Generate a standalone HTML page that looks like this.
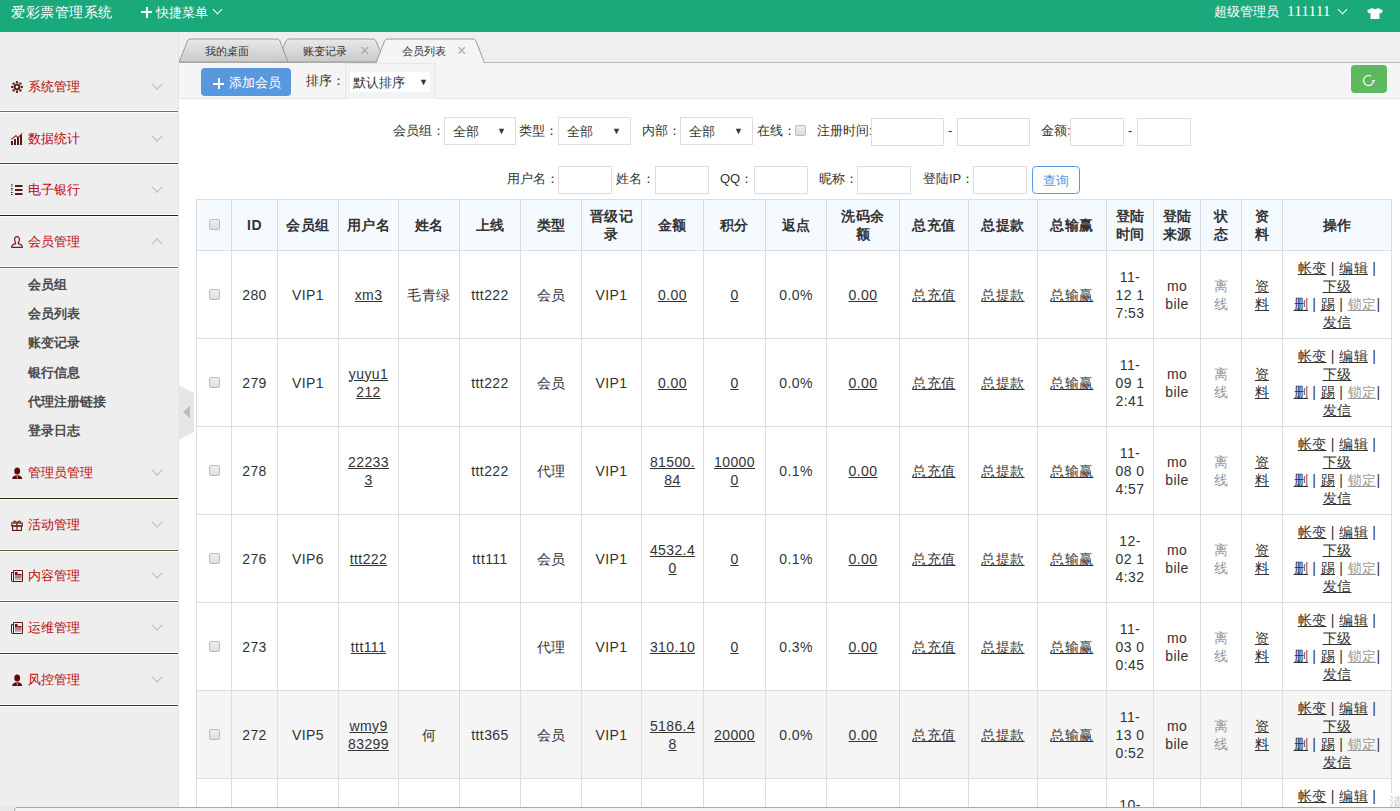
<!DOCTYPE html>
<html><head><meta charset="utf-8">
<style>
*{margin:0;padding:0;box-sizing:border-box}
html,body{width:1400px;height:811px;overflow:hidden;background:#fff;font-family:"Liberation Sans",sans-serif;color:#333;font-size:14px}
.abs{position:absolute}
#hdr{position:absolute;left:0;top:0;width:1400px;height:32px;background:#19a97b;color:#fff}
#hdr .t{position:absolute;left:11px;top:2px;font-size:14px;letter-spacing:0.5px;line-height:20px;white-space:nowrap}
#side{position:absolute;left:0;top:32px;width:179px;height:779px;background:#eee;border-right:1px solid #e3e3e3}
.si{position:absolute;left:0;width:178px}
.si .ic{position:absolute;left:11px;top:50%;margin-top:-6px;width:12px;height:12px;display:block}
.si .ic svg{display:block}
.si .st{position:absolute;left:28px;top:50%;margin-top:-9px;line-height:18px;font-size:13px;color:#bb0808;white-space:nowrap}
.chev{position:absolute;left:153px;top:50%;margin-top:-7px;width:8px;height:8px;border-right:1px solid #bbb;border-bottom:1px solid #bbb;transform:rotate(45deg)}
.chev.up{margin-top:-2px;transform:rotate(-135deg)}
.sep{position:absolute;left:0;width:178px;height:3px;border-top:1px solid #fff;border-bottom:1px solid #fff;background:#55583a}
.sub{position:absolute;left:28px;font-size:13px;line-height:20px;color:#4a4a4a;font-weight:bold;white-space:nowrap}
#tabbar{position:absolute;left:179px;top:32px;width:1221px;height:31px;background:#efeff1;border-bottom:1px solid #b8b8b8}
#toolbar{position:absolute;left:179px;top:63px;width:1221px;height:36px;background:#f5f5f5;border-bottom:1px solid #e2e2e2}
.tabtxt{position:absolute;top:43px;font-size:11px;line-height:16px;color:#333;white-space:nowrap}
.tabx{position:absolute;top:43px;font-size:16px;line-height:16px;color:#aaa}
.btn-add{position:absolute;left:201px;top:68px;width:90px;height:28px;background:#5a98de;border-radius:4px;color:#fff;font-size:13px;line-height:28px}
.lbl{position:absolute;font-size:13px;line-height:18px;color:#333;white-space:nowrap}
.sel{position:absolute;height:28px;border:1px solid #ddd;background:#fff;font-size:12.5px;line-height:28px;color:#333}
.sel .tri{position:absolute;right:9px;top:-1px;font-size:9px}
.inp{position:absolute;height:28px;border:1px solid #ddd;background:#fff}
.c{position:absolute;border-left:1px solid #ddd;border-top:1px solid #ddd;display:flex;align-items:center;justify-content:center;text-align:center;line-height:18px;font-size:14px;color:#333;white-space:nowrap;letter-spacing:0.4px}
.c.th{background:#f5fafe;font-weight:bold}
.c.hov{background:#f5f5f5}
.c.top{align-items:flex-start;padding-top:9px}
.c u{text-decoration:underline}
.g{color:#999}
.cb{display:inline-block;width:11px;height:11px;border:1px solid #bbb;border-radius:2px;background:linear-gradient(#eee,#ddd)}
</style></head><body>
<div id="hdr">
  <div class="t">爱彩票管理系统</div>
  <div class="abs" style="left:141px;top:7px;width:11px;height:11px">
    <div class="abs" style="left:0;top:4px;width:11px;height:2px;background:#fff"></div>
    <div class="abs" style="left:4.5px;top:0;width:2px;height:11px;background:#fff"></div>
  </div>
  <div class="abs" style="left:156px;top:4px;font-size:12.5px;line-height:18px;white-space:nowrap">快捷菜单</div>
  <div class="abs" style="left:214px;top:6px;width:7px;height:7px;border-right:1.5px solid #fff;border-bottom:1.5px solid #fff;transform:rotate(45deg)"></div>
  <div class="abs" style="left:1214px;top:3px;font-size:12.5px;line-height:18px;white-space:nowrap">超级管理员</div>
  <div class="abs" style="left:1287px;top:2px;font-family:'Liberation Serif',serif;font-size:15.5px;line-height:18px;white-space:nowrap">111111</div>
  <div class="abs" style="left:1339px;top:6px;width:7px;height:7px;border-right:1.5px solid #fff;border-bottom:1.5px solid #fff;transform:rotate(45deg)"></div>
  <svg class="abs" style="left:1367px;top:8px" width="16" height="11" viewBox="0 0 16 11"><path d="M5 0 L0 2.5 L1.8 5.5 L3.5 4.8 L3.5 11 L12.5 11 L12.5 4.8 L14.2 5.5 L16 2.5 L11 0 C10 1.5 6 1.5 5 0Z" fill="#fff"/></svg>
</div>
<div id="side">
</div>
<div style="position:absolute;left:0;top:0">
<div class="si" style="top:61px;height:51px"><span class="ic"><svg width="12" height="12" viewBox="0 0 12 12"><g fill="#5a1a10"><circle cx="6" cy="6" r="3.3"/><circle cx="6" cy="1.2" r="1.2"/><circle cx="6" cy="10.8" r="1.2"/><circle cx="1.2" cy="6" r="1.2"/><circle cx="10.8" cy="6" r="1.2"/><circle cx="2.6" cy="2.6" r="1.2"/><circle cx="9.4" cy="9.4" r="1.2"/><circle cx="2.6" cy="9.4" r="1.2"/><circle cx="9.4" cy="2.6" r="1.2"/></g><circle cx="6" cy="6" r="1.4" fill="#eee"/></svg></span><span class="st">系统管理</span><span class="chev"></span></div>
<div class="sep" style="top:110px;background:#707060"></div>
<div class="si" style="top:113px;height:51px"><span class="ic"><svg width="12" height="12" viewBox="0 0 12 12"><g fill="#5a1a10"><rect x="0" y="8" width="2" height="4"/><rect x="3" y="6" width="2" height="6"/><rect x="6" y="4" width="2" height="8"/><rect x="9" y="2" width="2" height="10"/><path d="M0 6 L5 2 L7 4 L11 0 L11.6 0.6 L7 5.2 L5 3.2 L0.6 6.8Z"/></g></svg></span><span class="st">数据统计</span><span class="chev"></span></div>
<div class="sep" style="top:162px;background:#4a4a2c"></div>
<div class="si" style="top:164px;height:51px"><span class="ic"><svg width="12" height="12" viewBox="0 0 12 12"><g fill="#5a1a10"><rect x="0.5" y="-0.5" width="1" height="3"/><rect x="0" y="4" width="1.6" height="1"/><rect x="0" y="5.5" width="1.6" height="1"/><rect x="0" y="8" width="1.6" height="1"/><rect x="0" y="10" width="1.6" height="1"/><rect x="4" y="1" width="7.5" height="2"/><rect x="4" y="5" width="7.5" height="2"/><rect x="4" y="9" width="7.5" height="2"/></g></svg></span><span class="st">电子银行</span><span class="chev"></span></div>
<div class="sep" style="top:214px;background:#22220f"></div>
<div class="si" style="top:216px;height:51px"><span class="ic"><svg width="12" height="12" viewBox="0 0 12 12"><path d="M6 0.7 C4.3 0.7 3.6 2 3.6 3.6 C3.6 5.2 4.4 6.3 4.6 6.8 L4.6 7.6 C2.5 8.2 0.8 9 0.8 10.6 L0.8 11.4 L11.2 11.4 L11.2 10.6 C11.2 9 9.5 8.2 7.4 7.6 L7.4 6.8 C7.6 6.3 8.4 5.2 8.4 3.6 C8.4 2 7.7 0.7 6 0.7Z" fill="none" stroke="#6a2020" stroke-width="1.2"/></svg></span><span class="st">会员管理</span><span class="chev up"></span></div>
<div class="sep" style="top:266px;background:#6a6a55"></div>
<div class="si" style="top:447px;height:51px"><span class="ic"><svg width="12" height="12" viewBox="0 0 12 12"><g fill="#620606"><ellipse cx="6.2" cy="3.9" rx="2.9" ry="3.5"/><path d="M1.2 12.4 C1.2 9.4 3 8.2 6.2 8.2 C9.4 8.2 11.2 9.4 11.2 12.4Z"/></g><rect x="5.7" y="9" width="1" height="2.5" fill="#c9b0a0"/></svg></span><span class="st">管理员管理</span><span class="chev"></span></div>
<div class="sep" style="top:497px;background:#181c08"></div>
<div class="si" style="top:499px;height:51px"><span class="ic"><svg width="12" height="12" viewBox="0 0 12 12"><g fill="none" stroke="#5a1a10" stroke-width="1.1"><rect x="0.8" y="4" width="10.4" height="3"/><rect x="1.6" y="7" width="8.8" height="4.5"/><path d="M6 4 V11.5 M6 4 C4 1 2 1.5 3 4 M6 4 C8 1 10 1.5 9 4"/></g></svg></span><span class="st">活动管理</span><span class="chev"></span></div>
<div class="sep" style="top:549px;background:#555a38"></div>
<div class="si" style="top:551px;height:50px"><span class="ic"><svg width="12" height="12" viewBox="0 0 12 12"><g fill="none" stroke="#6a1010" stroke-width="1"><path d="M2.5 0.5 H11.5 V11.5 H1.2 Q0.5 11.5 0.5 10.8 V2.5 H2.5"/><path d="M2.5 0.5 V11.2"/></g><g fill="#6a1010"><rect x="4" y="2" width="2.5" height="3.5"/><rect x="6.5" y="4" width="4" height="1.5"/><rect x="4" y="6.5" width="6.5" height="1"/><rect x="4" y="8.5" width="6.5" height="1" opacity="0.6"/></g></svg></span><span class="st">内容管理</span><span class="chev"></span></div>
<div class="sep" style="top:600px;background:#60644a"></div>
<div class="si" style="top:602px;height:51px"><span class="ic"><svg width="12" height="12" viewBox="0 0 12 12"><g fill="none" stroke="#6a1010" stroke-width="1"><path d="M2.5 0.5 H11.5 V11.5 H1.2 Q0.5 11.5 0.5 10.8 V2.5 H2.5"/><path d="M2.5 0.5 V11.2"/></g><g fill="#6a1010"><rect x="4" y="2" width="2.5" height="3.5"/><rect x="6.5" y="4" width="4" height="1.5"/><rect x="4" y="6.5" width="6.5" height="1"/><rect x="4" y="8.5" width="6.5" height="1" opacity="0.6"/></g></svg></span><span class="st">运维管理</span><span class="chev"></span></div>
<div class="sep" style="top:652px;background:#3c3e26"></div>
<div class="si" style="top:654px;height:51px"><span class="ic"><svg width="12" height="12" viewBox="0 0 12 12"><g fill="#620606"><ellipse cx="6.2" cy="3.9" rx="2.9" ry="3.5"/><path d="M1.2 12.4 C1.2 9.4 3 8.2 6.2 8.2 C9.4 8.2 11.2 9.4 11.2 12.4Z"/></g><rect x="5.7" y="9" width="1" height="2.5" fill="#c9b0a0"/></svg></span><span class="st">风控管理</span><span class="chev"></span></div>
<div class="sep" style="top:704px;background:#3c3e26"></div>
<div class="sub" style="top:274.6px">会员组</div>
<div class="sub" style="top:303.9px">会员列表</div>
<div class="sub" style="top:333.2px">账变记录</div>
<div class="sub" style="top:362.5px">银行信息</div>
<div class="sub" style="top:391.8px">代理注册链接</div>
<div class="sub" style="top:421.1px">登录日志</div>
</div>
<div id="tabbar"></div>
<svg class="abs" style="left:179px;top:38px" width="320" height="25" viewBox="0 0 320 25">
  <defs>
    <linearGradient id="tg" x1="0" y1="0" x2="0" y2="1"><stop offset="0" stop-color="#e9e9e9"/><stop offset="1" stop-color="#c9c9c9"/></linearGradient>
    <linearGradient id="ta" x1="0" y1="0" x2="0" y2="1"><stop offset="0" stop-color="#f4f4f4"/><stop offset="1" stop-color="#f5f5f5"/></linearGradient>
  </defs>
  <path d="M98 24 L107 3 Q108 1 110 1 L194 1 Q196 1 197 3 L206 24Z" fill="url(#tg)" stroke="#9a9a9a" stroke-width="1"/>
  <path d="M0 24 L8.5 3 Q9.5 1 11.5 1 L98 1 Q100 1 101 3 L109 24Z" fill="url(#tg)" stroke="#9a9a9a" stroke-width="1"/>
  <path d="M197 25 L205.5 3 Q206.5 1 208.5 1 L294 1 Q296 1 297 3 L305.5 25" fill="url(#ta)" stroke="#9a9a9a" stroke-width="1"/>
</svg>
<div class="tabtxt" style="left:205px">我的桌面</div>
<div class="tabtxt" style="left:303px">账变记录</div>
<div class="tabx" style="left:360px">&#215;</div>
<div class="tabtxt" style="left:402px">会员列表</div>
<div class="tabx" style="left:457px">&#215;</div>
<div id="toolbar"></div>
<div class="btn-add">
  <div class="abs" style="left:12px;top:10px;width:11px;height:11px">
    <div class="abs" style="left:0;top:4.5px;width:11px;height:2px;background:#fff"></div>
    <div class="abs" style="left:4.5px;top:0;width:2px;height:11px;background:#fff"></div>
  </div>
  <span class="abs" style="left:28px;top:1px;white-space:nowrap">添加会员</span>
</div>
<div class="lbl" style="left:306px;top:72px">排序：</div>
<div class="abs" style="left:345px;top:63px;width:91px;height:36px;border:1px solid #e6e6e6;border-bottom:none;background:#f3f3f3"></div>
<div class="abs" style="left:350px;top:72px;width:80px;height:20px;background:#fff;font-size:13px;line-height:22px;padding-left:3px;white-space:nowrap">默认排序<span class="abs" style="left:69px;top:-1px;font-size:9px">&#9660;</span></div>
<div class="abs" style="left:1351px;top:65px;width:36px;height:28px;background:#5eb95e;border-radius:4px">
  <svg class="abs" style="left:10px;top:8px" width="15" height="15" viewBox="0 0 15 15"><path d="M12.4 8.6 A5 5 0 1 1 10 3.2" fill="none" stroke="#fff" stroke-width="1.2"/><path d="M10.8 7 L14.4 7 L12.5 9.6Z" fill="#fff"/></svg>
</div>
<!-- filters row 1 -->
<div class="lbl" style="left:393px;top:122px">会员组：</div>
<div class="sel" style="left:444px;top:117px;width:72px"><span style="padding-left:8px">全部</span><span class="tri">&#9660;</span></div>
<div class="lbl" style="left:519px;top:122px">类型：</div>
<div class="sel" style="left:558px;top:117px;width:73px"><span style="padding-left:8px">全部</span><span class="tri">&#9660;</span></div>
<div class="lbl" style="left:642px;top:122px">内部：</div>
<div class="sel" style="left:680px;top:117px;width:73px"><span style="padding-left:8px">全部</span><span class="tri">&#9660;</span></div>
<div class="lbl" style="left:757px;top:122px">在线：</div>
<span class="cb abs" style="left:795px;top:125px"></span>
<div class="lbl" style="left:817px;top:122px">注册时间:</div>
<div class="inp" style="left:871px;top:118px;width:73px"></div>
<div class="lbl" style="left:948px;top:122px">-</div>
<div class="inp" style="left:957px;top:118px;width:73px"></div>
<div class="lbl" style="left:1041px;top:122px">金额:</div>
<div class="inp" style="left:1070px;top:118px;width:54px"></div>
<div class="lbl" style="left:1128px;top:122px">-</div>
<div class="inp" style="left:1137px;top:118px;width:54px"></div>
<!-- filters row 2 -->
<div class="lbl" style="left:507px;top:170px">用户名：</div>
<div class="inp" style="left:558px;top:166px;width:54px"></div>
<div class="lbl" style="left:616px;top:170px">姓名：</div>
<div class="inp" style="left:655px;top:166px;width:54px"></div>
<div class="lbl" style="left:720px;top:170px">QQ：</div>
<div class="inp" style="left:754px;top:166px;width:54px"></div>
<div class="lbl" style="left:819px;top:170px">昵称：</div>
<div class="inp" style="left:857px;top:166px;width:54px"></div>
<div class="lbl" style="left:923px;top:170px">登陆IP：</div>
<div class="inp" style="left:973px;top:166px;width:54px"></div>
<div class="abs" style="left:1032px;top:166px;width:48px;height:28px;border:1px solid #5a98de;border-radius:4px;color:#5a98de;font-size:13px;line-height:28px;text-align:center">查询</div>
<!-- table -->
<div style="position:absolute;left:0;top:0">
<div class="c th" style="left:196px;top:199px;width:35px;height:51px"><div><span class="cb"></span></div></div>
<div class="c th" style="left:231px;top:199px;width:46px;height:51px"><div>ID</div></div>
<div class="c th" style="left:277px;top:199px;width:61px;height:51px"><div>会员组</div></div>
<div class="c th" style="left:338px;top:199px;width:60px;height:51px"><div>用户名</div></div>
<div class="c th" style="left:398px;top:199px;width:61px;height:51px"><div>姓名</div></div>
<div class="c th" style="left:459px;top:199px;width:61px;height:51px"><div>上线</div></div>
<div class="c th" style="left:520px;top:199px;width:61px;height:51px"><div>类型</div></div>
<div class="c th" style="left:581px;top:199px;width:60px;height:51px"><div>晋级记<br>录</div></div>
<div class="c th" style="left:641px;top:199px;width:62px;height:51px"><div>金额</div></div>
<div class="c th" style="left:703px;top:199px;width:62px;height:51px"><div>积分</div></div>
<div class="c th" style="left:765px;top:199px;width:61px;height:51px"><div>返点</div></div>
<div class="c th" style="left:826px;top:199px;width:73px;height:51px"><div>洗码余<br>额</div></div>
<div class="c th" style="left:899px;top:199px;width:69px;height:51px"><div>总充值</div></div>
<div class="c th" style="left:968px;top:199px;width:69px;height:51px"><div>总提款</div></div>
<div class="c th" style="left:1037px;top:199px;width:69px;height:51px"><div>总输赢</div></div>
<div class="c th" style="left:1106px;top:199px;width:47px;height:51px"><div>登陆<br>时间</div></div>
<div class="c th" style="left:1153px;top:199px;width:47px;height:51px"><div>登陆<br>来源</div></div>
<div class="c th" style="left:1200px;top:199px;width:41px;height:51px"><div>状<br>态</div></div>
<div class="c th" style="left:1241px;top:199px;width:41px;height:51px"><div>资<br>料</div></div>
<div class="c th" style="left:1282px;top:199px;width:109px;height:51px"><div>操作</div></div>
<div class="c td" style="left:196px;top:250px;width:35px;height:88px"><div><span class="cb"></span></div></div>
<div class="c td" style="left:231px;top:250px;width:46px;height:88px"><div>280</div></div>
<div class="c td" style="left:277px;top:250px;width:61px;height:88px"><div>VIP1</div></div>
<div class="c td" style="left:338px;top:250px;width:60px;height:88px"><div><u>xm3</u></div></div>
<div class="c td" style="left:398px;top:250px;width:61px;height:88px"><div>毛青绿</div></div>
<div class="c td" style="left:459px;top:250px;width:61px;height:88px"><div>ttt222</div></div>
<div class="c td" style="left:520px;top:250px;width:61px;height:88px"><div>会员</div></div>
<div class="c td" style="left:581px;top:250px;width:60px;height:88px"><div>VIP1</div></div>
<div class="c td" style="left:641px;top:250px;width:62px;height:88px"><div><u>0.00</u></div></div>
<div class="c td" style="left:703px;top:250px;width:62px;height:88px"><div><u>0</u></div></div>
<div class="c td" style="left:765px;top:250px;width:61px;height:88px"><div>0.0%</div></div>
<div class="c td" style="left:826px;top:250px;width:73px;height:88px"><div><u>0.00</u></div></div>
<div class="c td" style="left:899px;top:250px;width:69px;height:88px"><div><u>总充值</u></div></div>
<div class="c td" style="left:968px;top:250px;width:69px;height:88px"><div><u>总提款</u></div></div>
<div class="c td" style="left:1037px;top:250px;width:69px;height:88px"><div><u>总输赢</u></div></div>
<div class="c td" style="left:1106px;top:250px;width:47px;height:88px"><div>11-<br>12 1<br>7:53</div></div>
<div class="c td" style="left:1153px;top:250px;width:47px;height:88px"><div>mo<br>bile</div></div>
<div class="c td" style="left:1200px;top:250px;width:41px;height:88px"><div><span class="g">离<br>线</span></div></div>
<div class="c td" style="left:1241px;top:250px;width:41px;height:88px"><div><u>资</u><br><u>料</u></div></div>
<div class="c td" style="left:1282px;top:250px;width:109px;height:88px"><div><u>帐变</u> | <u>编辑</u> |<br><u>下级</u><br><u>删</u> | <u>踢</u> | <u class="g">锁定</u>|<br><u>发信</u></div></div>
<div class="c td" style="left:196px;top:338px;width:35px;height:88px"><div><span class="cb"></span></div></div>
<div class="c td" style="left:231px;top:338px;width:46px;height:88px"><div>279</div></div>
<div class="c td" style="left:277px;top:338px;width:61px;height:88px"><div>VIP1</div></div>
<div class="c td" style="left:338px;top:338px;width:60px;height:88px"><div><u>yuyu1</u><br><u>212</u></div></div>
<div class="c td" style="left:398px;top:338px;width:61px;height:88px"><div></div></div>
<div class="c td" style="left:459px;top:338px;width:61px;height:88px"><div>ttt222</div></div>
<div class="c td" style="left:520px;top:338px;width:61px;height:88px"><div>会员</div></div>
<div class="c td" style="left:581px;top:338px;width:60px;height:88px"><div>VIP1</div></div>
<div class="c td" style="left:641px;top:338px;width:62px;height:88px"><div><u>0.00</u></div></div>
<div class="c td" style="left:703px;top:338px;width:62px;height:88px"><div><u>0</u></div></div>
<div class="c td" style="left:765px;top:338px;width:61px;height:88px"><div>0.0%</div></div>
<div class="c td" style="left:826px;top:338px;width:73px;height:88px"><div><u>0.00</u></div></div>
<div class="c td" style="left:899px;top:338px;width:69px;height:88px"><div><u>总充值</u></div></div>
<div class="c td" style="left:968px;top:338px;width:69px;height:88px"><div><u>总提款</u></div></div>
<div class="c td" style="left:1037px;top:338px;width:69px;height:88px"><div><u>总输赢</u></div></div>
<div class="c td" style="left:1106px;top:338px;width:47px;height:88px"><div>11-<br>09 1<br>2:41</div></div>
<div class="c td" style="left:1153px;top:338px;width:47px;height:88px"><div>mo<br>bile</div></div>
<div class="c td" style="left:1200px;top:338px;width:41px;height:88px"><div><span class="g">离<br>线</span></div></div>
<div class="c td" style="left:1241px;top:338px;width:41px;height:88px"><div><u>资</u><br><u>料</u></div></div>
<div class="c td" style="left:1282px;top:338px;width:109px;height:88px"><div><u>帐变</u> | <u>编辑</u> |<br><u>下级</u><br><u>删</u> | <u>踢</u> | <u class="g">锁定</u>|<br><u>发信</u></div></div>
<div class="c td" style="left:196px;top:426px;width:35px;height:88px"><div><span class="cb"></span></div></div>
<div class="c td" style="left:231px;top:426px;width:46px;height:88px"><div>278</div></div>
<div class="c td" style="left:277px;top:426px;width:61px;height:88px"><div></div></div>
<div class="c td" style="left:338px;top:426px;width:60px;height:88px"><div><u>22233</u><br><u>3</u></div></div>
<div class="c td" style="left:398px;top:426px;width:61px;height:88px"><div></div></div>
<div class="c td" style="left:459px;top:426px;width:61px;height:88px"><div>ttt222</div></div>
<div class="c td" style="left:520px;top:426px;width:61px;height:88px"><div>代理</div></div>
<div class="c td" style="left:581px;top:426px;width:60px;height:88px"><div>VIP1</div></div>
<div class="c td" style="left:641px;top:426px;width:62px;height:88px"><div><u>81500.</u><br><u>84</u></div></div>
<div class="c td" style="left:703px;top:426px;width:62px;height:88px"><div><u>10000</u><br><u>0</u></div></div>
<div class="c td" style="left:765px;top:426px;width:61px;height:88px"><div>0.1%</div></div>
<div class="c td" style="left:826px;top:426px;width:73px;height:88px"><div><u>0.00</u></div></div>
<div class="c td" style="left:899px;top:426px;width:69px;height:88px"><div><u>总充值</u></div></div>
<div class="c td" style="left:968px;top:426px;width:69px;height:88px"><div><u>总提款</u></div></div>
<div class="c td" style="left:1037px;top:426px;width:69px;height:88px"><div><u>总输赢</u></div></div>
<div class="c td" style="left:1106px;top:426px;width:47px;height:88px"><div>11-<br>08 0<br>4:57</div></div>
<div class="c td" style="left:1153px;top:426px;width:47px;height:88px"><div>mo<br>bile</div></div>
<div class="c td" style="left:1200px;top:426px;width:41px;height:88px"><div><span class="g">离<br>线</span></div></div>
<div class="c td" style="left:1241px;top:426px;width:41px;height:88px"><div><u>资</u><br><u>料</u></div></div>
<div class="c td" style="left:1282px;top:426px;width:109px;height:88px"><div><u>帐变</u> | <u>编辑</u> |<br><u>下级</u><br><u>删</u> | <u>踢</u> | <u class="g">锁定</u>|<br><u>发信</u></div></div>
<div class="c td" style="left:196px;top:514px;width:35px;height:88px"><div><span class="cb"></span></div></div>
<div class="c td" style="left:231px;top:514px;width:46px;height:88px"><div>276</div></div>
<div class="c td" style="left:277px;top:514px;width:61px;height:88px"><div>VIP6</div></div>
<div class="c td" style="left:338px;top:514px;width:60px;height:88px"><div><u>ttt222</u></div></div>
<div class="c td" style="left:398px;top:514px;width:61px;height:88px"><div></div></div>
<div class="c td" style="left:459px;top:514px;width:61px;height:88px"><div>ttt111</div></div>
<div class="c td" style="left:520px;top:514px;width:61px;height:88px"><div>会员</div></div>
<div class="c td" style="left:581px;top:514px;width:60px;height:88px"><div>VIP1</div></div>
<div class="c td" style="left:641px;top:514px;width:62px;height:88px"><div><u>4532.4</u><br><u>0</u></div></div>
<div class="c td" style="left:703px;top:514px;width:62px;height:88px"><div><u>0</u></div></div>
<div class="c td" style="left:765px;top:514px;width:61px;height:88px"><div>0.1%</div></div>
<div class="c td" style="left:826px;top:514px;width:73px;height:88px"><div><u>0.00</u></div></div>
<div class="c td" style="left:899px;top:514px;width:69px;height:88px"><div><u>总充值</u></div></div>
<div class="c td" style="left:968px;top:514px;width:69px;height:88px"><div><u>总提款</u></div></div>
<div class="c td" style="left:1037px;top:514px;width:69px;height:88px"><div><u>总输赢</u></div></div>
<div class="c td" style="left:1106px;top:514px;width:47px;height:88px"><div>12-<br>02 1<br>4:32</div></div>
<div class="c td" style="left:1153px;top:514px;width:47px;height:88px"><div>mo<br>bile</div></div>
<div class="c td" style="left:1200px;top:514px;width:41px;height:88px"><div><span class="g">离<br>线</span></div></div>
<div class="c td" style="left:1241px;top:514px;width:41px;height:88px"><div><u>资</u><br><u>料</u></div></div>
<div class="c td" style="left:1282px;top:514px;width:109px;height:88px"><div><u>帐变</u> | <u>编辑</u> |<br><u>下级</u><br><u>删</u> | <u>踢</u> | <u class="g">锁定</u>|<br><u>发信</u></div></div>
<div class="c td" style="left:196px;top:602px;width:35px;height:88px"><div><span class="cb"></span></div></div>
<div class="c td" style="left:231px;top:602px;width:46px;height:88px"><div>273</div></div>
<div class="c td" style="left:277px;top:602px;width:61px;height:88px"><div></div></div>
<div class="c td" style="left:338px;top:602px;width:60px;height:88px"><div><u>ttt111</u></div></div>
<div class="c td" style="left:398px;top:602px;width:61px;height:88px"><div></div></div>
<div class="c td" style="left:459px;top:602px;width:61px;height:88px"><div></div></div>
<div class="c td" style="left:520px;top:602px;width:61px;height:88px"><div>代理</div></div>
<div class="c td" style="left:581px;top:602px;width:60px;height:88px"><div>VIP1</div></div>
<div class="c td" style="left:641px;top:602px;width:62px;height:88px"><div><u>310.10</u></div></div>
<div class="c td" style="left:703px;top:602px;width:62px;height:88px"><div><u>0</u></div></div>
<div class="c td" style="left:765px;top:602px;width:61px;height:88px"><div>0.3%</div></div>
<div class="c td" style="left:826px;top:602px;width:73px;height:88px"><div><u>0.00</u></div></div>
<div class="c td" style="left:899px;top:602px;width:69px;height:88px"><div><u>总充值</u></div></div>
<div class="c td" style="left:968px;top:602px;width:69px;height:88px"><div><u>总提款</u></div></div>
<div class="c td" style="left:1037px;top:602px;width:69px;height:88px"><div><u>总输赢</u></div></div>
<div class="c td" style="left:1106px;top:602px;width:47px;height:88px"><div>11-<br>03 0<br>0:45</div></div>
<div class="c td" style="left:1153px;top:602px;width:47px;height:88px"><div>mo<br>bile</div></div>
<div class="c td" style="left:1200px;top:602px;width:41px;height:88px"><div><span class="g">离<br>线</span></div></div>
<div class="c td" style="left:1241px;top:602px;width:41px;height:88px"><div><u>资</u><br><u>料</u></div></div>
<div class="c td" style="left:1282px;top:602px;width:109px;height:88px"><div><u>帐变</u> | <u>编辑</u> |<br><u>下级</u><br><u>删</u> | <u>踢</u> | <u class="g">锁定</u>|<br><u>发信</u></div></div>
<div class="c td hov" style="left:196px;top:690px;width:35px;height:88px"><div><span class="cb"></span></div></div>
<div class="c td hov" style="left:231px;top:690px;width:46px;height:88px"><div>272</div></div>
<div class="c td hov" style="left:277px;top:690px;width:61px;height:88px"><div>VIP5</div></div>
<div class="c td hov" style="left:338px;top:690px;width:60px;height:88px"><div><u>wmy9</u><br><u>83299</u></div></div>
<div class="c td hov" style="left:398px;top:690px;width:61px;height:88px"><div>何</div></div>
<div class="c td hov" style="left:459px;top:690px;width:61px;height:88px"><div>ttt365</div></div>
<div class="c td hov" style="left:520px;top:690px;width:61px;height:88px"><div>会员</div></div>
<div class="c td hov" style="left:581px;top:690px;width:60px;height:88px"><div>VIP1</div></div>
<div class="c td hov" style="left:641px;top:690px;width:62px;height:88px"><div><u>5186.4</u><br><u>8</u></div></div>
<div class="c td hov" style="left:703px;top:690px;width:62px;height:88px"><div><u>20000</u></div></div>
<div class="c td hov" style="left:765px;top:690px;width:61px;height:88px"><div>0.0%</div></div>
<div class="c td hov" style="left:826px;top:690px;width:73px;height:88px"><div><u>0.00</u></div></div>
<div class="c td hov" style="left:899px;top:690px;width:69px;height:88px"><div><u>总充值</u></div></div>
<div class="c td hov" style="left:968px;top:690px;width:69px;height:88px"><div><u>总提款</u></div></div>
<div class="c td hov" style="left:1037px;top:690px;width:69px;height:88px"><div><u>总输赢</u></div></div>
<div class="c td hov" style="left:1106px;top:690px;width:47px;height:88px"><div>11-<br>13 0<br>0:52</div></div>
<div class="c td hov" style="left:1153px;top:690px;width:47px;height:88px"><div>mo<br>bile</div></div>
<div class="c td hov" style="left:1200px;top:690px;width:41px;height:88px"><div><span class="g">离<br>线</span></div></div>
<div class="c td hov" style="left:1241px;top:690px;width:41px;height:88px"><div><u>资</u><br><u>料</u></div></div>
<div class="c td hov" style="left:1282px;top:690px;width:109px;height:88px"><div><u>帐变</u> | <u>编辑</u> |<br><u>下级</u><br><u>删</u> | <u>踢</u> | <u class="g">锁定</u>|<br><u>发信</u></div></div>
<div class="c td" style="left:196px;top:778px;width:35px;height:88px"><div></div></div>
<div class="c td" style="left:231px;top:778px;width:46px;height:88px"><div></div></div>
<div class="c td" style="left:277px;top:778px;width:61px;height:88px"><div></div></div>
<div class="c td" style="left:338px;top:778px;width:60px;height:88px"><div></div></div>
<div class="c td" style="left:398px;top:778px;width:61px;height:88px"><div></div></div>
<div class="c td" style="left:459px;top:778px;width:61px;height:88px"><div></div></div>
<div class="c td" style="left:520px;top:778px;width:61px;height:88px"><div></div></div>
<div class="c td" style="left:581px;top:778px;width:60px;height:88px"><div></div></div>
<div class="c td" style="left:641px;top:778px;width:62px;height:88px"><div></div></div>
<div class="c td" style="left:703px;top:778px;width:62px;height:88px"><div></div></div>
<div class="c td" style="left:765px;top:778px;width:61px;height:88px"><div></div></div>
<div class="c td" style="left:826px;top:778px;width:73px;height:88px"><div></div></div>
<div class="c td" style="left:899px;top:778px;width:69px;height:88px"><div></div></div>
<div class="c td" style="left:968px;top:778px;width:69px;height:88px"><div></div></div>
<div class="c td" style="left:1037px;top:778px;width:69px;height:88px"><div></div></div>
<div class="c td" style="left:1106px;top:778px;width:47px;height:88px"><div>10-<br>10 1<br>1:11</div></div>
<div class="c td" style="left:1153px;top:778px;width:47px;height:88px"><div></div></div>
<div class="c td" style="left:1200px;top:778px;width:41px;height:88px"><div></div></div>
<div class="c td" style="left:1241px;top:778px;width:41px;height:88px"><div></div></div>
<div class="c td" style="left:1282px;top:778px;width:109px;height:88px"><div><u>帐变</u> | <u>编辑</u> |<br><u>下级</u><br><u>删</u> | <u>踢</u> | <u class="g">锁定</u>|<br><u>发信</u></div></div>
</div>
<div class="abs" style="left:1391px;top:199px;width:1px;height:612px;background:#ddd"></div>
<!-- sidebar handle -->
<svg class="abs" style="left:178px;top:385px" width="16" height="55" viewBox="0 0 16 55"><path d="M0 0 L16 8 L16 47 L0 55Z" fill="#e6e6e6"/><path d="M5 27 L12 21 L12 33Z" fill="#bbb"/></svg>
<!-- bottom bar -->
<div class="abs" style="left:0;top:806px;width:14px;height:5px;background:#e8e8e8"></div><div class="abs" style="left:14px;top:807px;width:1400px;height:10px;border:1px solid #aaa;border-radius:3px;background:#f3f3f3"></div><div class="abs" style="left:1389px;top:793px;width:20px;height:14px;background:#fff;font-size:14px;line-height:18px;color:#ccc;overflow:hidden">清</div>
</body></html>
